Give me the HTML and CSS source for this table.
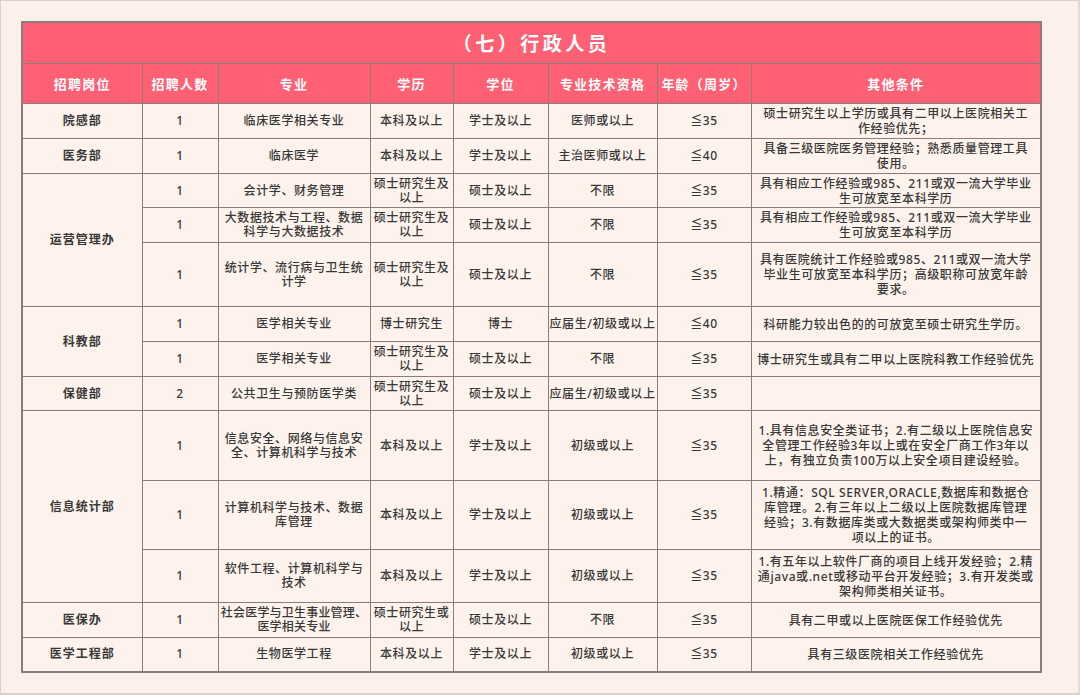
FILE: index.html
```html
<!DOCTYPE html>
<html lang="zh-CN">
<head>
<meta charset="utf-8">
<title>行政人员</title>
<link rel="stylesheet" href="styles.css">
</head>
<body>
<div class="frame">
<table class="recruit">
<colgroup>
<col class="c1"><col class="c2"><col class="c3"><col class="c4"><col class="c5"><col class="c6"><col class="c7"><col class="c8">
</colgroup>
<thead>
<tr class="title-row"><th colspan="8">（七）行政人员</th></tr>
<tr class="head-row">
<th>招聘岗位</th><th>招聘人数</th><th>专业</th><th>学历</th><th>学位</th><th>专业技术资格</th><th>年龄（周岁）</th><th>其他条件</th>
</tr>
</thead>
<tbody>
<tr class="h35">
<td class="dept">院感部</td><td>1</td><td>临床医学相关专业</td><td>本科及以上</td><td>学士及以上</td><td>医师或以上</td><td>≦35</td>
<td class="other">硕士研究生以上学历或具有二甲以上医院相关工<br>作经验优先；</td>
</tr>
<tr class="h35">
<td class="dept">医务部</td><td>1</td><td>临床医学</td><td>本科及以上</td><td>学士及以上</td><td>主治医师或以上</td><td>≦40</td>
<td class="other">具备三级医院医务管理经验；熟悉质量管理工具<br>使用。</td>
</tr>
<tr class="h34">
<td class="dept" rowspan="3">运营管理办</td><td>1</td><td>会计学、财务管理</td><td>硕士研究生及<br>以上</td><td>硕士及以上</td><td>不限</td><td>≦35</td>
<td class="other">具有相应工作经验或985、211或双一流大学毕业<br>生可放宽至本科学历</td>
</tr>
<tr class="h35">
<td>1</td><td>大数据技术与工程、数据<br>科学与大数据技术</td><td>硕士研究生及<br>以上</td><td>硕士及以上</td><td>不限</td><td>≦35</td>
<td class="other">具有相应工作经验或985、211或双一流大学毕业<br>生可放宽至本科学历</td>
</tr>
<tr class="h64">
<td>1</td><td>统计学、流行病与卫生统<br>计学</td><td>硕士研究生及<br>以上</td><td>硕士及以上</td><td>不限</td><td>≦35</td>
<td class="other">具有医院统计工作经验或985、211或双一流大学<br>毕业生可放宽至本科学历；高级职称可放宽年龄<br>要求。</td>
</tr>
<tr class="h35">
<td class="dept" rowspan="2">科教部</td><td>1</td><td>医学相关专业</td><td>博士研究生</td><td>博士</td><td>应届生/初级或以上</td><td>≦40</td>
<td class="other">科研能力较出色的的可放宽至硕士研究生学历。</td>
</tr>
<tr class="h35">
<td>1</td><td>医学相关专业</td><td>硕士研究生及<br>以上</td><td>硕士及以上</td><td>不限</td><td>≦35</td>
<td class="other">博士研究生或具有二甲以上医院科教工作经验优先</td>
</tr>
<tr class="h34">
<td class="dept">保健部</td><td>2</td><td>公共卫生与预防医学类</td><td>硕士研究生及<br>以上</td><td>硕士及以上</td><td>应届生/初级或以上</td><td>≦35</td>
<td class="other"></td>
</tr>
<tr class="h70">
<td class="dept" rowspan="3">信息统计部</td><td>1</td><td>信息安全、网络与信息安<br>全、计算机科学与技术</td><td>本科及以上</td><td>学士及以上</td><td>初级或以上</td><td>≦35</td>
<td class="other">1.具有信息安全类证书；2.有二级以上医院信息安<br>全管理工作经验3年以上或在安全厂商工作3年以<br>上，有独立负责100万以上安全项目建设经验。</td>
</tr>
<tr class="h69">
<td>1</td><td>计算机科学与技术、数据<br>库管理</td><td>本科及以上</td><td>学士及以上</td><td>初级或以上</td><td>≦35</td>
<td class="other">1.精通：SQL SERVER,ORACLE,数据库和数据仓<br>库管理。2.有三年以上二级以上医院数据库管理<br>经验；3.有数据库类或大数据类或架构师类中一<br>项以上的证书。</td>
</tr>
<tr class="h53">
<td>1</td><td>软件工程、计算机科学与<br>技术</td><td>本科及以上</td><td>学士及以上</td><td>初级或以上</td><td>≦35</td>
<td class="other">1.有五年以上软件厂商的项目上线开发经验；2.精<br>通java或.net或移动平台开发经验；3.有开发类或<br>架构师类相关证书。</td>
</tr>
<tr class="h35">
<td class="dept">医保办</td><td>1</td><td class="tight">社会医学与卫生事业管理、<br>医学相关专业</td><td>硕士研究生或<br>以上</td><td>硕士及以上</td><td>不限</td><td>≦35</td>
<td class="other">具有二甲或以上医院医保工作经验优先</td>
</tr>
<tr class="h34">
<td class="dept">医学工程部</td><td>1</td><td>生物医学工程</td><td>本科及以上</td><td>学士及以上</td><td>初级或以上</td><td>≦35</td>
<td class="other">具有三级医院相关工作经验优先</td>
</tr>
</tbody>
</table>
</div>
</body>
</html>
```
FILE: styles.css
```css
html, body {
  margin: 0;
  padding: 0;
  background: #fcf1ea;
}
.frame {
  box-sizing: border-box;
  width: 1080px;
  height: 695px;
  border-top: 1px solid #d9d1ca;
  border-left: 1px solid #d9d1ca;
  border-right: 2px solid #e2dad3;
  border-bottom: 2px solid #d9d1ca;
  padding: 20px 0 0 20px;
  background: #fcf1ea;
  font-family: "Noto Sans", "Noto Sans CJK SC", sans-serif;
}
.recruit {
  border-collapse: collapse;
  table-layout: fixed;
  width: 1019px;
  border: 2px solid #8c7d78;
  background: #fdf3ec;
  color: #383838;
}
.c1 { width: 120px; }
.c2 { width: 76px; }
.c3 { width: 152px; }
.c4 { width: 83px; }
.c5 { width: 95px; }
.c6 { width: 109px; }
.c7 { width: 94px; }
.c8 { width: 290px; }
.recruit th,
.recruit td {
  border: 1.5px solid #8c7d78;
  text-align: center;
  vertical-align: middle;
  padding: 0;
  white-space: nowrap;
}
.title-row th {
  height: 40px;
  background: #ff6073;
  color: #ffffff;
  font-size: 19px;
  font-weight: 700;
  letter-spacing: 3.5px;
}
.head-row th {
  height: 39px;
  background: #ff6073;
  color: #ffffff;
  font-size: 13px;
  font-weight: 700;
  letter-spacing: 1.2px;
}
.recruit td {
  font-size: 12px;
  font-weight: 500;
  line-height: 14px;
  letter-spacing: 0.6px;
}
.recruit td.tight {
  letter-spacing: 0.2px;
}
.recruit td.dept {
  font-weight: 700;
  letter-spacing: 1px;
}
.recruit td.other {
  line-height: 15px;
}
.h34 { height: 34px; }
.h35 { height: 35px; }
.h53 { height: 53px; }
.h64 { height: 64px; }
.h69 { height: 69px; }
.h70 { height: 70px; }
```
